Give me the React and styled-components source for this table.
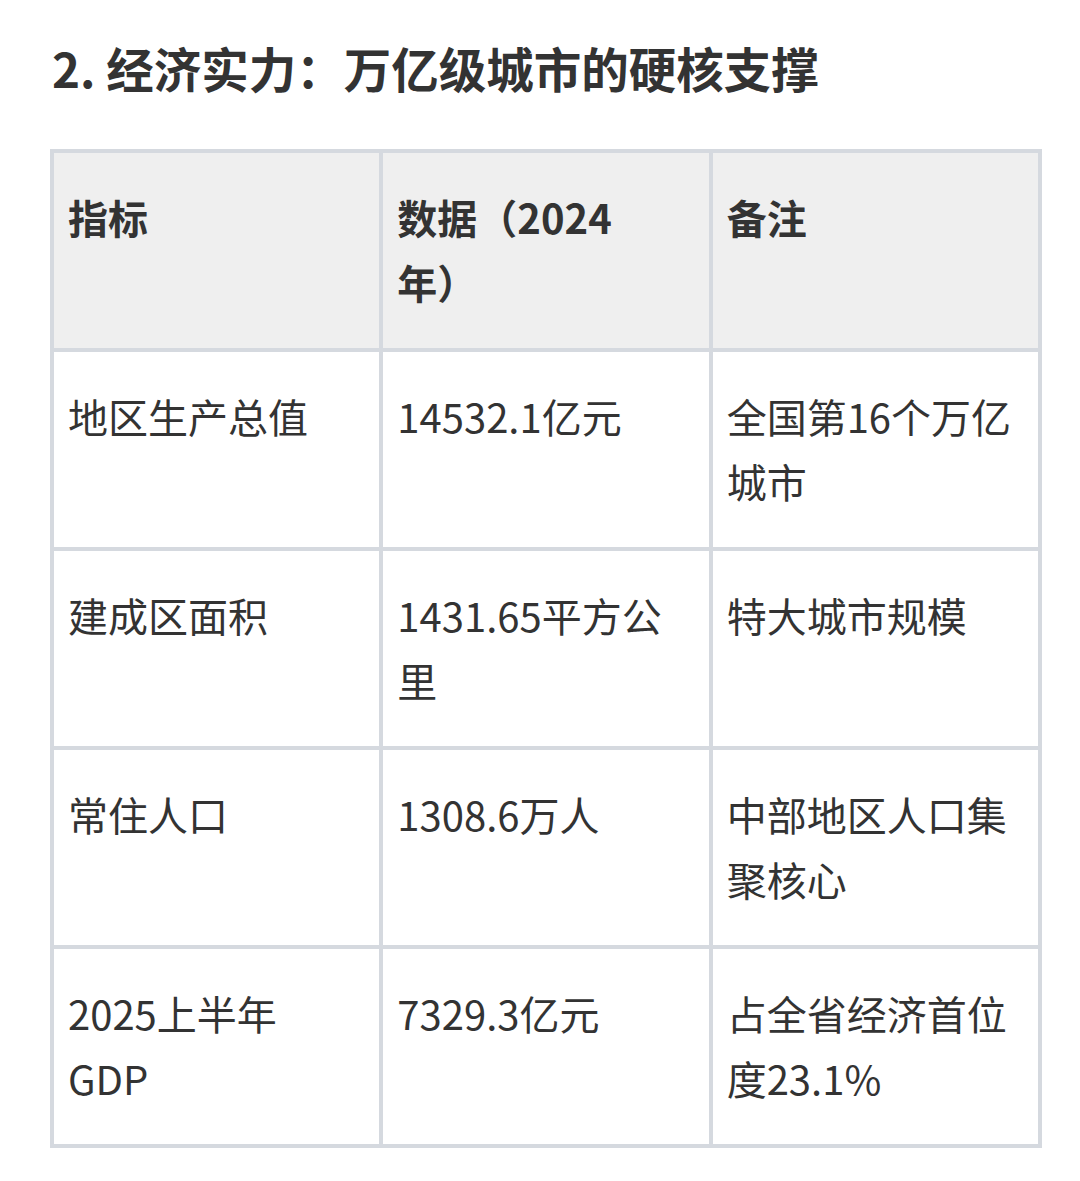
import React from 'react';
import styled, { createGlobalStyle } from 'styled-components';

const GlobalStyle = createGlobalStyle`
  html, body {
    margin: 0;
    padding: 0;
    background: #ffffff;
  }
  body {
    font-family: "Noto Sans CJK SC", "Noto Sans", "Liberation Sans", sans-serif;
    color: #333333;
  }
`;

// right padding per column, tuned so the lines wrap where the source wraps
const columnPad = [28, 42, 26];

const heads = ['指标', '数据（2024年）', '备注'];

const rows = [
  ['地区生产总值', '14532.1亿元', '全国第16个万亿城市'],
  ['建成区面积', '1431.65平方公里', '特大城市规模'],
  ['常住人口', '1308.6万人', '中部地区人口集聚核心'],
  ['2025上半年GDP', '7329.3亿元', '占全省经济首位度23.1%'],
];

function App() {
  return (
    <Styled.Page>
      <GlobalStyle />
      <Styled.Title>2. 经济实力：万亿级城市的硬核支撑</Styled.Title>
      <Styled.Table>
        <colgroup>
          <col />
          <col />
          <col />
        </colgroup>
        <thead>
          <tr>
            {heads.map((h, i) => (
              <Styled.Head key={h} $pr={columnPad[i]}>{h}</Styled.Head>
            ))}
          </tr>
        </thead>
        <tbody>
          {rows.map((row) => (
            <tr key={row[0]}>
              {row.map((cell, i) => (
                <Styled.Cell key={cell} $pr={columnPad[i]}>{cell}</Styled.Cell>
              ))}
            </tr>
          ))}
        </tbody>
      </Styled.Table>
    </Styled.Page>
  );
}

const Styled = {
  Page: styled.div`
    padding: 36px 38px 30px 50px;
  `,
  Title: styled.h2`
    margin: 0 0 49px 2px;
    font-size: 47.5px;
    line-height: 64px;
    font-weight: 700;
    color: #333333;
  `,
  Table: styled.table`
    width: 992px;
    table-layout: fixed;
    border-collapse: collapse;
    border: 4px solid #d5d9df;
    col { width: 33.33%; }
  `,
  Head: styled.th`
    background: #efefef;
    border: 4px solid #d5d9df;
    padding: 32px ${(p) => p.$pr}px 33px 14px;
    height: 130px;
    text-align: left;
    vertical-align: top;
    font-size: 40px;
    line-height: 65px;
    font-weight: 700;
    color: #333333;
  `,
  Cell: styled.td`
    background: #ffffff;
    border: 4px solid #d5d9df;
    padding: 32px ${(p) => p.$pr}px 33px 14px;
    height: 130px;
    vertical-align: top;
    font-size: 40px;
    line-height: 65px;
    font-weight: 400;
    color: #333333;
  `,
};

export default App;
